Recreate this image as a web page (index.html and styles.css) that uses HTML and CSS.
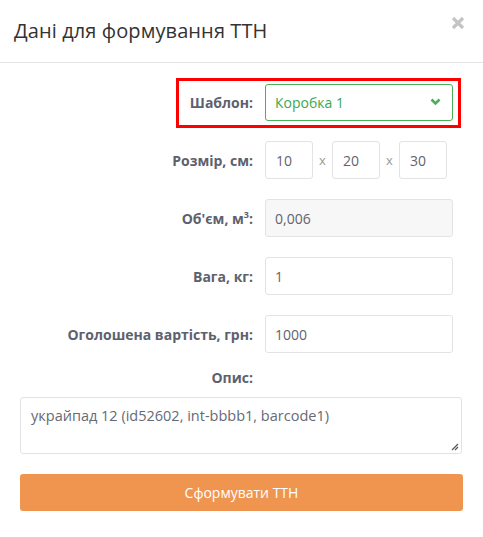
FILE: index.html
```html
<!DOCTYPE html>
<html lang="uk">
<head>
<meta charset="utf-8">
<title>Дані для формування ТТН</title>
<link rel="stylesheet" href="styles.css">
</head>
<body>
<div class="modal">
  <div class="modal-header">
    <h4 class="modal-title">Дані для формування ТТН</h4>
    <button class="close" type="button" aria-label="Закрити">
      <svg width="14" height="14" viewBox="0 0 14 14"><path d="M2 2 L12 12 M12 2 L2 12" stroke="#c4c4c4" stroke-width="3.2" stroke-linecap="butt"/></svg>
    </button>
  </div>
  <div class="modal-body">
    <div class="form-row highlighted">
      <label class="label">Шаблон:</label>
      <div class="select-wrap">
        <div class="select">Коробка 1</div>
        <svg class="chevron" width="11" height="8" viewBox="0 0 11 8"><path d="M1.5 1.5 L5.5 5.5 L9.5 1.5" fill="none" stroke="#4cae58" stroke-width="2.6"/></svg>
      </div>
      <div class="highlight"></div>
    </div>
    <div class="form-row">
      <label class="label">Розмір, см:</label>
      <div class="dims">
        <div class="input small">10</div>
        <span class="times">x</span>
        <div class="input small">20</div>
        <span class="times">x</span>
        <div class="input small">30</div>
      </div>
    </div>
    <div class="form-row">
      <label class="label">Об'єм, м<sup>3</sup>:</label>
      <div class="input readonly">0,006</div>
    </div>
    <div class="form-row">
      <label class="label">Вага, кг:</label>
      <div class="input">1</div>
    </div>
    <div class="form-row">
      <label class="label">Оголошена вартість, грн:</label>
      <div class="input">1000</div>
    </div>
    <div class="desc-label">
      <label class="label">Опис:</label>
    </div>
    <div class="textarea">украйпад 12 (id52602, int-bbbb1, barcode1)
      <svg class="grip" width="8" height="8" viewBox="0 0 8 8"><path d="M7 1 L1 7 M7 4 L4 7" stroke="#555" stroke-width="1.2"/></svg>
    </div>
    <button class="submit" type="button">Сформувати ТТН</button>
  </div>
</div>
</body>
</html>
```
FILE: styles.css
```css
* { box-sizing: border-box; }
html, body {
  margin: 0;
  padding: 0;
  background: #fff;
}
body {
  font-family: "Open Sans", "Noto Sans", sans-serif;
  font-size: 14px;
  color: #555;
}
.modal {
  width: 483px;
}
.modal-header {
  display: flex;
  align-items: center;
  justify-content: space-between;
  padding: 15px 18px 15px 14px;
  border-bottom: 1px solid #e5e5e5;
  height: 63px;
}
.modal-title {
  margin: 0;
  font-weight: 400;
  font-size: 20px;
  line-height: 32px;
  color: #333;
  letter-spacing: 0.1px;
}
.close {
  border: 0;
  background: none;
  padding: 0;
  width: 14px;
  height: 14px;
  margin-top: -16px;
  display: flex;
}
.modal-body {
  padding: 21px 20px 20px 20px;
}
.form-row {
  position: relative;
  display: grid;
  grid-template-columns: 233px 188px;
  column-gap: 12px;
  align-items: center;
  margin-bottom: 20px;
}
.label {
  text-align: right;
  font-weight: 700;
  font-size: 14px;
  color: #5d616d;
}
.label sup {
  font-size: 9px;
  line-height: 0;
}
.input {
  height: 38px;
  border: 1px solid #e3e3e6;
  border-radius: 3px;
  padding: 0 9px;
  display: flex;
  align-items: center;
  color: #5f636e;
  font-size: 14px;
  background: #fff;
}
.input.readonly {
  background: #f7f7f7;
}
.dims {
  display: flex;
  align-items: center;
}
.input.small {
  width: 48px;
  padding-left: 10px;
}
.times {
  width: 19px;
  text-align: center;
  color: #999;
  font-size: 13px;
}
.select-wrap {
  position: relative;
}
.select {
  height: 37px;
  border: 1px solid #4cae58;
  border-radius: 3px;
  padding: 0 9px;
  display: flex;
  align-items: center;
  color: #3aa84f;
  font-size: 14px;
}
.chevron {
  position: absolute;
  right: 12px;
  top: 14px;
}
.highlight {
  position: absolute;
  left: 156px;
  top: -6px;
  width: 285px;
  height: 50px;
  border: 3px solid #f00;
  pointer-events: none;
}
.desc-label {
  display: grid;
  grid-template-columns: 233px;
  margin-top: -5px;
  line-height: 20px;
  margin-bottom: 9px;
}
.textarea {
  position: relative;
  height: 57px;
  border: 1px solid #e3e3e6;
  border-radius: 3px;
  padding: 8px 10px;
  line-height: 20px;
  color: #666a75;
  font-size: 14.5px;
  width: 442px;
  margin-bottom: 20px;
}
.grip {
  position: absolute;
  right: 2px;
  bottom: 2px;
}
.submit {
  display: block;
  width: 443px;
  height: 37px;
  border: 0;
  border-radius: 3px;
  background: #f0954f;
  color: #fff;
  font-family: "Open Sans", "Noto Sans", sans-serif;
  font-size: 14px;
}
```
